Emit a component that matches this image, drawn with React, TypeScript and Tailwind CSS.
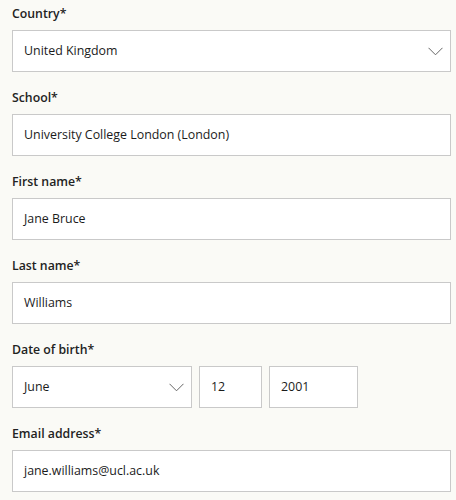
import React from 'react';

const Chevron = () => (
  <svg width="15" height="9" viewBox="0 0 15 9" fill="none" className="shrink-0">
    <path d="M0.5 0.8 L7.5 7.8 L14.5 0.8" stroke="#666666" strokeWidth="1" />
  </svg>
);

const Label = ({ children }: { children: React.ReactNode }) => (
  <div className="h-5 leading-5 text-[12.3px] font-semibold text-[#222222] mb-[6px]">{children}</div>
);

const Box = ({ value, select, className = '' }: { value: string; select?: boolean; className?: string }) => (
  <div className={`h-[42px] bg-white border border-[#c9c9c9] flex items-center justify-between pl-[11px] pr-[7px] ${className}`}>
    <span className="text-[12.4px] text-[#1b1b1b]">{value}</span>
    {select && <Chevron />}
  </div>
);

export default function App() {
  return (
    <div className="min-h-screen bg-[#fafaf6] px-3 pt-1 font-['Open_Sans',sans-serif]">
      <div className="w-[439px]">
        <div className="mb-4">
          <Label>Country*</Label>
          <Box value="United Kingdom" select />
        </div>
        <div className="mb-4">
          <Label>School*</Label>
          <Box value="University College London (London)" />
        </div>
        <div className="mb-4">
          <Label>First name*</Label>
          <Box value="Jane Bruce" />
        </div>
        <div className="mb-4">
          <Label>Last name*</Label>
          <Box value="Williams" />
        </div>
        <div className="mb-4">
          <Label>Date of birth*</Label>
          <div className="flex gap-[7px]">
            <Box value="June" select className="w-[180px]" />
            <Box value="12" className="w-[63px]" />
            <Box value="2001" className="w-[89px]" />
          </div>
        </div>
        <div>
          <Label>Email address*</Label>
          <Box value="jane.williams@ucl.ac.uk" />
        </div>
      </div>
    </div>
  );
}
